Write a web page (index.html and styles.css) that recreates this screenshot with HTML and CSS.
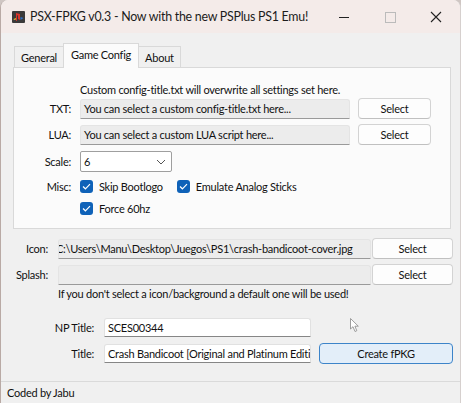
FILE: index.html
```html
<!DOCTYPE html>
<html>
<head>
<meta charset="utf-8">
<link rel="stylesheet" href="styles.css">
</head>
<body>
<div class="window">
  <div class="titlebar">
    <svg class="appicon" width="13" height="12" viewBox="0 0 13 12">
      <rect x="0" y="0" width="13" height="12" rx="1" fill="#3a3a3a"/>
      <path d="M4 2 L8 3 L8 9 L6 8 L6 4.5 L5 4.2 L5 10 L4 9.7 Z" fill="#d8332a"/>
      <path d="M8.5 6 L11.5 7 L8.5 9 Z" fill="#2f6fc8"/>
      <path d="M1.5 8 L4 7 L4 8.5 L2 9 Z" fill="#e8b830"/>
    </svg>
    <span class="title">PSX-FPKG v0.3 - Now with the new PSPlus PS1 Emu!</span>
    <div class="controls">
      <svg class="ctl" width="46" height="32" viewBox="0 0 46 32"><line x1="18" y1="16.5" x2="28" y2="16.5" stroke="#222" stroke-width="1"/></svg>
      <svg class="ctl" width="46" height="32" viewBox="0 0 46 32"><rect x="18.5" y="11.5" width="10" height="10" fill="none" stroke="#bbb" stroke-width="1"/></svg>
      <svg class="ctl" width="46" height="32" viewBox="0 0 46 32"><path d="M18 11 L28 21 M28 11 L18 21" stroke="#222" stroke-width="1.1"/></svg>
    </div>
  </div>
  <div class="client">
    <div class="tabs">
      <div class="tab">General</div>
      <div class="tab active">Game Config</div>
      <div class="tab">About</div>
    </div>
    <div class="panel">
      <div class="note">Custom config-title.txt will overwrite all settings set here.</div>
      <div class="row">
        <span class="lbl">TXT:</span>
        <div class="field ro w269">You can select a custom config-title.txt here...</div>
        <button class="btn b73">Select</button>
      </div>
      <div class="row r2">
        <span class="lbl">LUA:</span>
        <div class="field ro w269">You can select a custom LUA script here...</div>
        <button class="btn b73">Select</button>
      </div>
      <div class="row r3">
        <span class="lbl">Scale:</span>
        <div class="combo"><span>6</span>
          <svg width="10" height="6" viewBox="0 0 10 6"><path d="M1 1 L5 5 L9 1" fill="none" stroke="#555" stroke-width="1"/></svg>
        </div>
      </div>
      <div class="row r4">
        <span class="lbl">Misc:</span>
        <label class="chk"><span class="box"><svg width="9" height="7" viewBox="0 0 9 7"><path d="M1 3.5 L3.4 5.8 L8 1.2" fill="none" stroke="#fff" stroke-width="1.2"/></svg></span>Skip Bootlogo</label>
        <label class="chk c2"><span class="box"><svg width="9" height="7" viewBox="0 0 9 7"><path d="M1 3.5 L3.4 5.8 L8 1.2" fill="none" stroke="#fff" stroke-width="1.2"/></svg></span>Emulate Analog Sticks</label>
      </div>
      <div class="row r5">
        <span class="lbl"></span>
        <label class="chk"><span class="box"><svg width="9" height="7" viewBox="0 0 9 7"><path d="M1 3.5 L3.4 5.8 L8 1.2" fill="none" stroke="#fff" stroke-width="1.2"/></svg></span>Force 60hz</label>
      </div>
    </div>
    <div class="files">
      <div class="frow">
        <span class="flbl">Icon:</span>
        <div class="field ro w312"><span class="shift">C:\Users\Manu\Desktop\Juegos\PS1\crash-bandicoot-cover.jpg</span></div>
        <button class="btn b81">Select</button>
      </div>
      <div class="frow f2">
        <span class="flbl">Splash:</span>
        <div class="field ro w312"></div>
        <button class="btn b81">Select</button>
      </div>
      <div class="fnote">If you don't select a icon/background a default one will be used!</div>
    </div>
    <div class="meta">
      <div class="mrow">
        <span class="mlbl">NP Title:</span>
        <div class="field wh">SCES00344</div>
        <svg class="cursor" width="10" height="15" viewBox="0 0 10 15"><path d="M0.5 0.5 L0.5 11 L3 8.7 L5 13.5 L6.8 12.7 L4.9 8.2 L8.3 8.2 Z" fill="#fff" stroke="#888" stroke-width="0.8"/></svg>
      </div>
      <div class="mrow m2">
        <span class="mlbl">Title:</span>
        <div class="field wh">Crash Bandicoot [Original and Platinum Edition]</div>
        <button class="btn create">Create fPKG</button>
      </div>
    </div>
  </div>
  <div class="status">Coded by Jabu</div>
</div>
</body>
</html>
```
FILE: styles.css
```css
* { box-sizing: border-box; }
html, body { margin: 0; padding: 0; background: #cfc6c3; }
body {
  font-family: "Segoe UI", Lato, "Liberation Sans", Arial, sans-serif;
  font-size: 11px;
  letter-spacing: -0.25px;
  color: #111;
}
.window {
  width: 461px;
  height: 403px;
  background: #f0f0f0;
  border-radius: 8px 8px 0 0;
  border-left: 1px solid #b9aaa5;
  border-right: 1px solid #d6d0ce;
  display: flex;
  flex-direction: column;
  overflow: hidden;
}
.titlebar {
  height: 33px;
  background: #f4ebe9;
  display: flex;
  align-items: center;
  padding-left: 11px;
}
.appicon { flex: none; }
.title {
  margin-left: 5px;
  font-size: 12.4px;
  letter-spacing: -0.25px;
  color: #1c1c1c;
  white-space: nowrap;
  flex: 1;
}
.controls { display: flex; margin-right: 1px; }
.ctl { display: block; }
.client {
  flex: 1;
  display: flex;
  flex-direction: column;
  background: #f0f0f0;
}
.tabs {
  display: flex;
  align-items: flex-end;
  padding-left: 13px;
  margin-top: 10px;
  height: 24px;
  position: relative;
  z-index: 1;
}
.tab {
  height: 21px;
  padding: 0 6px;
  border: 1px solid #d9d9d9;
  border-bottom: none;
  background: #f0f0f0;
  line-height: 22px;
  white-space: nowrap;
}
.tab.active {
  height: 25px;
  background: #fbfbfb;
  margin: 0 -1px -1px;
  padding: 0 7px;
  line-height: 22px;
  position: relative;
}
.panel {
  margin: 0 9px 0 12px;
  height: 162px;
  background: #fbfbfb;
  border: 1px solid #d9d9d9;
  padding-top: 15px;
  display: flex;
  flex-direction: column;
}
.note { padding-left: 66px; height: 15px; line-height: 14px; }
.row {
  display: flex;
  align-items: center;
  height: 21px;
}
.row.r2 { margin-top: 5px; }
.row.r3 { margin-top: 6px; }
.row.r4 { margin-top: 5px; height: 18px; }
.row.r5 { margin-top: 4px; height: 18px; }
.lbl {
  width: 57px;
  text-align: right;
  margin-right: 9px;
  flex: none;
}
.field {
  height: 20px;
  line-height: 18px;
  padding: 0 3px;
  white-space: nowrap;
  overflow: hidden;
  border: 1px solid #e1e1e1;
  border-bottom-color: #868686;
  border-radius: 3px 3px 0 0;
}
.field.ro { background: #ececec; border-color: #e4e4e4; border-bottom-color: #9a9a9a; }
.field.wh { background: #fff; }
.w269 { width: 270px; }
.w312 { width: 313px; }
.shift { display: inline-block; margin-left: -6px; }
.btn {
  font: inherit;
  letter-spacing: inherit;
  color: #111;
  background: #fdfdfd;
  border: 1px solid #d3d3d3;
  border-bottom-color: #c0c0c0;
  border-radius: 4px;
  height: 21px;
  padding: 0;
  flex: none;
}
.b73 { width: 73px; margin-left: 8px; }
.b81 { width: 81px; margin-left: 1px; }
.combo {
  width: 92px;
  height: 21px;
  background: #fff;
  border: 1px solid #9f9f9f;
  border-radius: 2px;
  display: flex;
  align-items: center;
  justify-content: space-between;
  padding: 0 5px 0 3px;
}
.chk { display: flex; align-items: center; white-space: nowrap; }
.chk.c2 { margin-left: 14px; }
.box {
  width: 13px;
  height: 13px;
  border-radius: 3px;
  background: #0f62b8;
  display: flex;
  align-items: center;
  justify-content: center;
  margin-right: 6px;
}
.files { padding-top: 9px; }
.frow { display: flex; align-items: center; height: 21px; }
.frow.f2 { margin-top: 5px; }
.flbl { width: 47px; text-align: right; margin-right: 10px; flex: none; }
.fnote { padding-left: 57px; margin-top: 2px; line-height: 14px; }
.meta { padding-top: 16px; }
.mrow { display: flex; align-items: center; height: 21px; position: relative; }
.mrow.m2 { margin-top: 5px; }
.mlbl { width: 93px; text-align: right; margin-right: 10px; flex: none; }
.mrow .field.wh { width: 207px; height: 19px; line-height: 17px; }
.cursor { position: absolute; left: 349px; top: 1px; }
.btn.create {
  width: 134px;
  height: 21px;
  margin-left: 8px;
  background: #e3eef9;
  border: 1px solid #3d84c9;
  border-radius: 4px;
}
.status {
  height: 22px;
  border-top: 1px solid #dadada;
  background: #f0f0f0;
  padding-left: 6px;
  line-height: 21px;
}
```
